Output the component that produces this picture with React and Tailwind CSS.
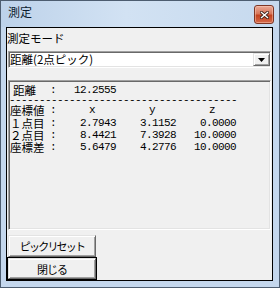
export default function App() {
  const raised =
    "border border-t-[#e3e3e3] border-l-[#e3e3e3] border-r-[#696969] border-b-[#696969] shadow-[inset_1px_1px_0_#ffffff,inset_-1px_-1px_0_#a0a0a0] bg-[#f0f0f0]";
  const sunken =
    "border border-t-[#a0a0a0] border-l-[#a0a0a0] border-r-white border-b-white shadow-[inset_1px_1px_0_#696969,inset_-1px_-1px_0_#e3e3e3]";
  const num = "font-['Liberation_Mono',monospace] text-[11px] tracking-[-0.6px]";
  const rows = [
    ["１点目", "2.7943", "3.1152", "0.0000"],
    ["２点目", "8.4421", "7.3928", "10.0000"],
    ["座標差", "5.6479", "4.2776", "10.0000"],
  ];
  return (
    <div className="w-[280px] h-[288px] bg-[#c4d7ed] border border-[#4d5d70] flex flex-col pl-[5px] pr-[6px] pb-[6px] font-['Noto_Sans_CJK_JP',sans-serif] text-black">
      <div className="h-[26px] flex items-start justify-between bg-[linear-gradient(90deg,#bdd2ea,#d2e2f3_45%,#c6d9ee)] -ml-[5px] -mr-[6px] pl-[7px] pr-[5px]">
        <span className="text-[12px] leading-[14px] mt-[4px] text-[#0b1a2e]">測定</span>
        <div className="mt-[4px] w-[20px] h-[19px] rounded-[3px] border border-[#7d3626] bg-[linear-gradient(#eaa996,#d7775b_45%,#c2421f_55%,#d5694a)] flex items-center justify-center shadow-[inset_0_0_0_1px_rgba(255,210,190,0.45)]">
          <svg width="9" height="8" viewBox="0 0 9 8">
            <path d="M1.5 1.5 L7.5 6.5 M7.5 1.5 L1.5 6.5" stroke="#3b2019" strokeWidth="3" strokeLinecap="square" />
            <path d="M1.5 1.5 L7.5 6.5 M7.5 1.5 L1.5 6.5" stroke="#ffffff" strokeWidth="1.4" strokeLinecap="square" />
          </svg>
        </div>
      </div>
      <div className="flex-1 border border-black bg-[#f0f0f0] flex flex-col px-[1px]">
        <div className="mt-[3px] h-[14px] leading-[14px] text-[11.5px] -ml-[1px]">測定モード</div>
        <div className={`mt-[6px] h-[17px] ${sunken} bg-white flex items-center pl-[1px] pr-0`}>
          <span className="flex-1 text-[11.5px] leading-[13px]">距離(2点ピック)</span>
          <div className={`w-[17px] h-[13px] ${raised} flex items-center justify-center`}>
            <svg width="7" height="4" viewBox="0 0 7 4">
              <path d="M0 0 H7 L3.5 4 Z" fill="#000" />
            </svg>
          </div>
        </div>
        <div className={`mt-[12px] h-[150px] ${sunken} flex flex-col pt-[4px]`}>
          <div className="h-[10px] flex items-center">
            <span className="w-[41px] pl-[4px] text-[11.5px] leading-[10px]">距離</span>
            <span className={`w-[6px] text-center ${num} leading-[10px]`}>:</span>
            <span className={`w-[60px] text-right ${num} leading-[10px]`}>12.2555</span>
          </div>
          <div className={`h-[10px] ${num} leading-[10px] whitespace-pre`}>
            {"-".repeat(38)}
          </div>
          <div className="h-[10px] flex items-center">
            <span className="w-[41px] pl-[1px] text-[11.5px] leading-[10px]">座標値</span>
            <span className={`w-[6px] text-center ${num} leading-[10px]`}>:</span>
            <span className={`w-[60px] text-right pr-[21px] ${num} leading-[10px]`}>x</span>
            <span className={`w-[60px] text-right pr-[21px] ${num} leading-[10px]`}>y</span>
            <span className={`w-[60px] text-right pr-[21px] ${num} leading-[10px]`}>z</span>
          </div>
          <div className="mt-[2px] flex flex-col">
            {rows.map((r) => (
              <div key={r[0]} className="h-[12px] flex items-center">
                <span className="w-[41px] pl-[1px] text-[11.5px] leading-[12px]">{r[0]}</span>
                <span className={`w-[6px] text-center ${num} leading-[12px]`}>:</span>
                <span className={`w-[60px] text-right ${num} leading-[12px]`}>{r[1]}</span>
                <span className={`w-[60px] text-right ${num} leading-[12px]`}>{r[2]}</span>
                <span className={`w-[60px] text-right ${num} leading-[12px]`}>{r[3]}</span>
              </div>
            ))}
          </div>
        </div>
        <div className={`mt-[5px] h-[22px] w-[88px] ${raised} flex items-center justify-center text-[11px] tracking-[-1.8px] leading-[14px]`}>
          ピックリセット
        </div>
        <div className="h-[23px] w-[90px] -ml-[1px] border border-black flex">
          <div className={`flex-1 ${raised} flex items-center justify-center text-[11px] tracking-[-1px] leading-[14px]`}>
            閉じる
          </div>
        </div>
      </div>
    </div>
  );
}
